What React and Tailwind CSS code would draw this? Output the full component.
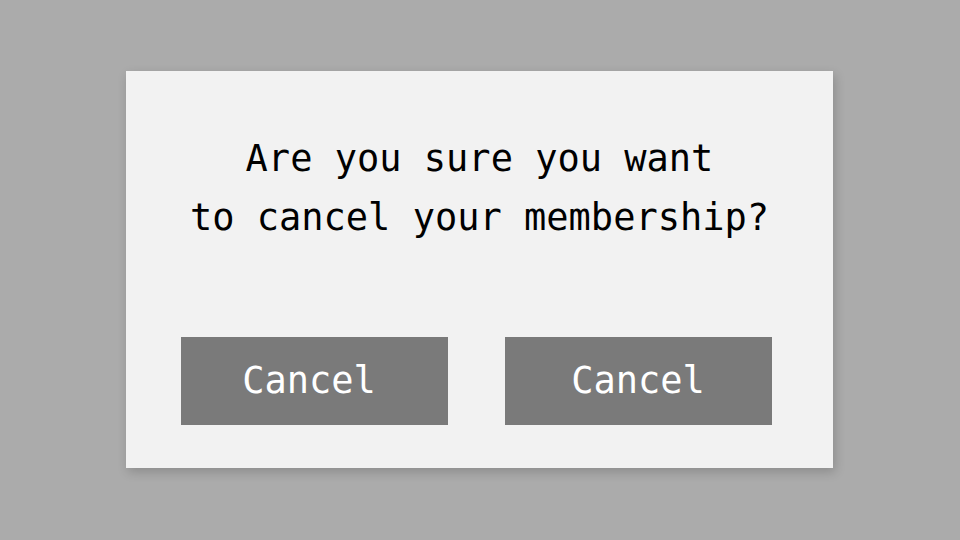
export default function App() {
  return (
    <div className="w-[960px] h-[540px] bg-[#ababab] flex items-center justify-center font-['DejaVu_Sans_Mono',monospace]">
      <div className="w-[707px] h-[397px] mr-[1px] mb-[1px] bg-[#f2f2f2] shadow-[2px_4px_10px_rgba(0,0,0,0.18)] flex flex-col items-center pt-[58px]">
        <p className="text-[37px] leading-[59px] text-black text-center">
          Are you sure you want
          <br />
          to cancel your membership?
        </p>
        <div className="mt-[90px] flex gap-[57px] pr-[7px]">
          <button className="w-[267px] h-[88px] bg-[#7a7a7a] text-white text-[37px] flex items-center justify-center pr-[10px]">
            Cancel
          </button>
          <button className="w-[267px] h-[88px] bg-[#7a7a7a] text-white text-[37px] flex items-center justify-center">
            Cancel
          </button>
        </div>
      </div>
    </div>
  );
}
